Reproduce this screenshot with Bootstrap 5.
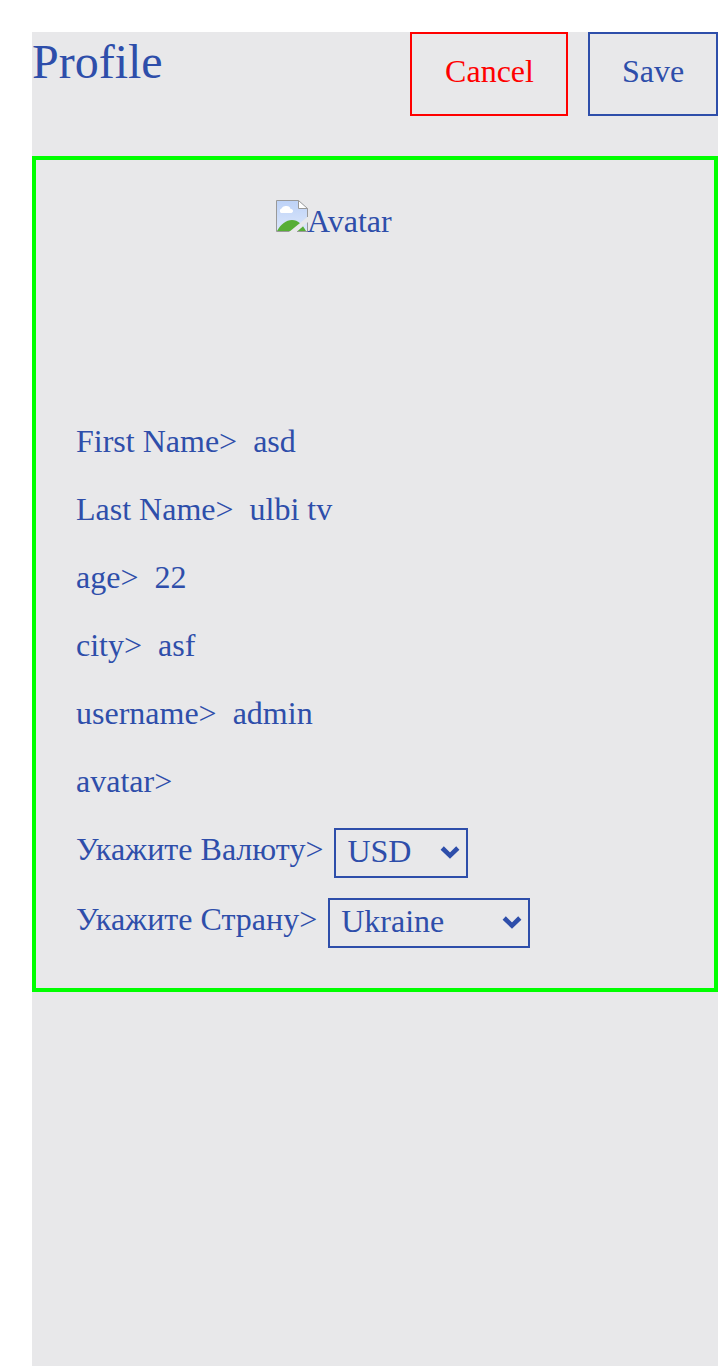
<!DOCTYPE html>
<html lang="ru">
<head>
<meta charset="utf-8">
<meta name="viewport" content="width=device-width, initial-scale=1">
<title>Profile</title>
<link href="https://cdn.jsdelivr.net/npm/bootstrap@5.3.0/dist/css/bootstrap.min.css" rel="stylesheet">
<style>
:root { --ink: #2e4eaa; --surface: #e8e8ea; }
body { font-family: "Liberation Serif", "Times New Roman", serif; font-size: 32px; line-height: 42px; color: var(--ink); background: #fff; }
.page { background: var(--surface); margin-left: 32px; margin-top: 32px; min-height: calc(100vh - 32px); }
.page-head { height: 84px; margin-bottom: 40px; }
.page-head h1 { font-size: 48px; line-height: 60px; font-weight: 400; }
.action { --bs-btn-font-size: 32px; --bs-btn-line-height: 42px; --bs-btn-border-radius: 0; --bs-btn-border-width: 2px; --bs-btn-padding-x: 32px; --bs-btn-color: var(--ink); --bs-btn-border-color: var(--ink); height: 84px; padding-top: 16px; padding-bottom: 22px; }
.action-cancel { --bs-btn-color: #f00; --bs-btn-border-color: #f00; width: 158px; padding-right: 31px; }
.action-save { width: 130px; }
.actions { gap: 20px; }
.profile { border: 4px solid #0f0; padding: 40px; }
.avatar-box { width: 198px; height: 200px; }
.avatar-box svg { width: 32px; height: 32px; margin-right: -1px; }
.fields { gap: 20px; padding-top: 20px; }
.field { height: 48px; }
.field-select { height: 50px; }
.field-value { margin-left: 16px; }
.picker { margin-left: 11px; height: 50px; }
.picker select { appearance: none; display: block; width: 100%; height: 50px; border: 2px solid var(--ink); border-radius: 0; background: transparent; color: var(--ink); font: inherit; line-height: 42px; padding: 0 0 4px 11px; }
.picker svg { position: absolute; right: 8px; top: 17px; pointer-events: none; }
.w-currency { width: 134px; }
.w-country { width: 202px; }
</style>
</head>
<body>
<main class="page">
  <header class="page-head d-flex justify-content-between align-items-start">
    <h1 class="m-0">Profile</h1>
    <div class="actions d-flex">
      <button type="button" class="btn action action-cancel">Cancel</button>
      <button type="button" class="btn action action-save">Save</button>
    </div>
  </header>
  <section class="profile">
    <div class="avatar-box d-flex align-items-start mx-auto" role="img" aria-label="Avatar">
      <svg viewBox="0 0 32 32" class="flex-shrink-0">
        <defs><linearGradient id="sky" x1="0" y1="0" x2="0" y2="1"><stop offset="0" stop-color="#bdd2f7"/><stop offset="1" stop-color="#dce7fb"/></linearGradient></defs>
        <path d="M.5.5H22.500L31.500 8.500V31.500H.5Z" fill="url(#sky)"/>
        <path d="M5 13a2.500 2.500 0 0 1 .5-4.500q1-3 5-2.500 3.500 0 4 3a2 2 0 0 1 1 4Z" fill="#fff"/>
        <path d="M1 31C5 24 10 20 16 20c6 0 10 4 14 11Z" fill="#57ae36"/>
        <path d="M13 32 32 16.500V22L20.500 32Z" fill="#e8e8ea"/>
        <path d="M22.500.5V8.500H31.500Z" fill="#fff"/>
        <path d="M13.500 31.500H.5V.5H22.500L31.500 8.500V17M22.500.5V8.500H31.500M31.500 22.500V31.500H21" fill="none" stroke="#999" stroke-width="1"/>
      </svg>
      <span>Avatar</span>
    </div>
    <div class="fields d-flex flex-column">
      <div class="field d-flex"><span>First Name&gt;</span><span class="field-value">asd</span></div>
      <div class="field d-flex"><span>Last Name&gt;</span><span class="field-value">ulbi tv</span></div>
      <div class="field d-flex"><span>age&gt;</span><span class="field-value">22</span></div>
      <div class="field d-flex"><span>city&gt;</span><span class="field-value">asf</span></div>
      <div class="field d-flex"><span>username&gt;</span><span class="field-value">admin</span></div>
      <div class="field d-flex"><span>avatar&gt;</span></div>
      <div class="field-select d-flex">
        <label for="currency">Укажите Валюту&gt;</label>
        <div class="picker w-currency position-relative">
          <select id="currency"><option>USD</option></select>
          <svg width="20" height="16" viewBox="0 0 20 16"><path d="M2.200 3 10 10.600 17.800 3" fill="none" stroke="#2e4eaa" stroke-width="4.600"/></svg>
        </div>
      </div>
      <div class="field-select d-flex">
        <label for="country">Укажите Страну&gt;</label>
        <div class="picker w-country position-relative">
          <select id="country"><option>Ukraine</option></select>
          <svg width="20" height="16" viewBox="0 0 20 16"><path d="M2.200 3 10 10.600 17.800 3" fill="none" stroke="#2e4eaa" stroke-width="4.600"/></svg>
        </div>
      </div>
    </div>
  </section>
</main>
<script src="https://cdn.jsdelivr.net/npm/bootstrap@5.3.0/dist/js/bootstrap.bundle.min.js"></script>
</body>
</html>
